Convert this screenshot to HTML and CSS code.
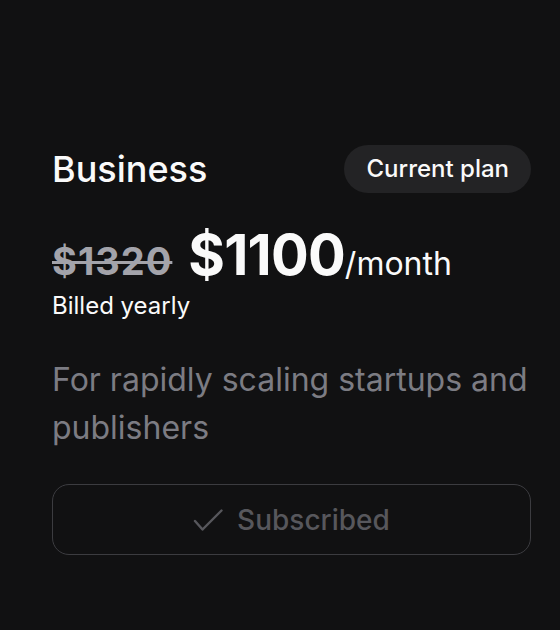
FILE: index.html
```html
<!DOCTYPE html>
<html lang="en">
<head>
    <meta charset="UTF-8">
    <meta name="viewport" content="width=device-width, initial-scale=1.0">
    <title>Business plan</title>
    <link rel="stylesheet" href="styles.css">
</head>
<body>
    <div class="plan-card">
        <div class="plan-header">
            <h2 class="plan-name">Business</h2>
            <span class="plan-badge">Current plan</span>
        </div>

        <div class="plan-price">
            <span class="price-old">$1320</span>
            <span class="price-now">$1100</span>
            <span class="price-period">/month</span>
        </div>
        <div class="plan-billing">Billed yearly</div>

        <p class="plan-desc">For rapidly scaling startups and publishers</p>

        <button class="plan-button" disabled>
            <svg class="check-icon" width="30" height="24" viewBox="0 0 30 24" fill="none">
                <polyline points="2,13 9.5,21.5 28.5,2.5" stroke="currentColor" stroke-width="2.4" stroke-linecap="round" stroke-linejoin="round"/>
            </svg>
            <span>Subscribed</span>
        </button>
    </div>
</body>
</html>
```

FILE: styles.css
```css
body {
    margin: 0;
    background: #111112;
    font-family: Inter, "Noto Sans", sans-serif;
    color: #fafafa;
}

.plan-card {
    width: 479px;
    padding: 145px 0 0 52px;
}

.plan-header {
    display: flex;
    justify-content: space-between;
    align-items: center;
}

.plan-name {
    margin: 0;
    font-size: 36px;
    font-weight: 500;
    line-height: 48px;
}

.plan-badge {
    background: #232325;
    border-radius: 24px;
    padding: 8px 22px 8px 23px;
    font-size: 24px;
    font-weight: 500;
    line-height: 32px;
}

.plan-price {
    display: flex;
    align-items: baseline;
    margin-top: 34px;
    line-height: 1;
}

.price-old {
    font-size: 38px;
    font-weight: 700;
    letter-spacing: 1px;
    color: #a3a3aa;
    text-decoration: line-through;
    text-decoration-thickness: 3px;
    margin-right: 16px;
}

.price-now {
    font-size: 56px;
    font-weight: 700;
    letter-spacing: -0.8px;
}

.price-period {
    font-size: 32px;
}

.plan-billing {
    margin-top: 7px;
    font-size: 24px;
    line-height: 32px;
}

.plan-desc {
    margin: 34px 0 0;
    font-size: 32px;
    line-height: 48px;
    color: #7c7c83;
}

.plan-button {
    margin-top: 32px;
    width: 100%;
    height: 71px;
    display: flex;
    align-items: center;
    justify-content: center;
    gap: 14px;
    background: transparent;
    border: 1.5px solid #3c3c40;
    border-radius: 17px;
    color: #57575c;
    font-family: inherit;
    font-size: 28px;
    font-weight: 500;
}
```
